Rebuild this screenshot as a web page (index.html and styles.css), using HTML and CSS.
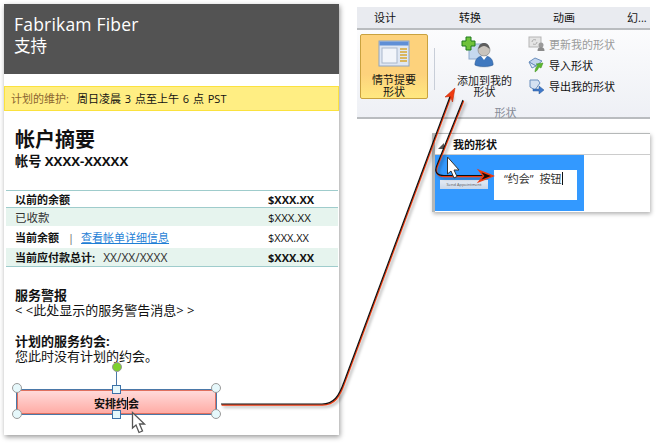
FILE: index.html
```html
<!DOCTYPE html>
<html lang="zh">

<head>
    <meta charset="UTF-8">
    <title>我的形状</title>
    <link rel="stylesheet" href="styles.css">
</head>

<body>
    <div class="page">
        <div class="brand">
            <div class="brand-name">Fabrikam Fiber</div>
            <div class="brand-sub">支持</div>
        </div>
        <div class="notice"><span class="notice-label">计划的维护:</span>周日凌晨 3 点至上午 6 点 PST</div>
        <h1>帐户摘要</h1>
        <h2>帐号 XXXX-XXXXX</h2>
        <div class="rows">
            <div class="row row-first"><b>以前的余额</b><b class="amount">$XXX.XX</b></div>
            <div class="row row-tint row-second"><span class="soft">已收款</span><span class="amount">$XXX.XX</span></div>
            <div class="row row-third"><span><b>当前余额</b><span class="pipe">|</span><a href="#">查看帐单详细信息</a></span><span class="amount">$XXX.XX</span></div>
            <div class="row row-tint row-last"><span><b>当前应付款总计:</b><span class="due">XX/XX/XXXX</span></span><b class="amount">$XXX.XX</b></div>
        </div>
        <div class="info">
            <b>服务警报</b>
            <div>&lt; &lt;此处显示的服务警告消息&gt; &gt;</div>
        </div>
        <div class="info info-next">
            <b>计划的服务约会:</b>
            <div>您此时没有计划的约会。</div>
        </div>
        <div class="shape">
            <span class="stem"></span>
            <span class="rotate"></span>
            <span class="dot dot-tl"></span>
            <span class="dot dot-tr"></span>
            <span class="dot dot-bl"></span>
            <span class="dot dot-br"></span>
            <span class="sq sq-top"></span>
            <span class="sq sq-bottom"></span>
            <b class="shape-text">安排约<i class="caret"></i>会</b>
        </div>
    </div>

    <div class="side">
        <div class="ribbon">
            <div class="tabs">
                <span class="tab tab-1">设计</span>
                <span class="tab tab-2">转换</span>
                <span class="tab tab-3">动画</span>
                <span class="tab tab-4">幻...</span>
            </div>
            <div class="tools">
                <div class="big-btn">
                    <svg width="32" height="27" viewBox="0 0 32 27">
                        <rect x="1" y="1" width="30" height="25" fill="#dfe7f3" stroke="#8ea3c0" />
                        <rect x="1.5" y="1.5" width="29" height="4" fill="#5f8fd6" />
                        <rect x="4" y="8" width="15" height="15" fill="#f2f5fa" stroke="#a9b7cc" />
                        <path d="M22 9h7M22 12h7M22 15h7M22 18h7M22 21h7" stroke="#d9a62e" stroke-width="1.4" />
                    </svg>
                    <span class="big-label">情节提要<br>形状</span>
                </div>
                <div class="sep"></div>
                <div class="add-btn">
                    <svg width="34" height="32" viewBox="0 0 34 32">
                        <rect x="8" y="8" width="17" height="15" fill="#c5d8ef" stroke="#8ea9cc" />
                        <path d="M5 1h5v4h4v5h-4v4H5v-4H1V5h4z" fill="#6fc23b" stroke="#1f7a1f" />
                        <ellipse cx="23" cy="28" rx="10" ry="4" fill="#dfe4ea" />
                        <path d="M14 29c0-6 3-9 9-9s9 3 9 9c-5 2-13 2-18 0z" fill="#3f78bf" stroke="#2a5b98" stroke-width=".6" />
                        <path d="M20 20l3 4 3-4z" fill="#fff" />
                        <circle cx="23" cy="14" r="6" fill="#c9c4bd" stroke="#7c7c7c" stroke-width=".6" />
                        <path d="M17.5 13c0-4 2.500-6 5.500-6s5.500 2 5.500 6c-2-2-4-3-5.500-3s-3.500 1-5.500 3z" fill="#5d5d5d" />
                    </svg>
                    <span class="add-label">添加到我的<br>形状</span>
                </div>
                <ul class="tool-list">
                    <li class="off">
                        <svg width="17" height="15" viewBox="0 0 17 15">
                            <rect x="1" y="1" width="12" height="10" fill="#e4e4e4" stroke="#b5b5b5" />
                            <path d="M4 6c0-2 2-3 4-2M9 6c0 2-2 3-4 2" stroke="#aaa" fill="none" />
                            <circle cx="13" cy="9" r="2.500" fill="#9b9b9b" />
                            <path d="M9.500 15c0-3 1.500-4 3.500-4s3.500 1 3.500 4z" fill="#8c8c8c" />
                        </svg>
                        更新我的形状
                    </li>
                    <li>
                        <svg width="17" height="16" viewBox="0 0 17 16">
                            <path d="M1 5l6-4 7 3-6 5z" fill="#c3d6ee" stroke="#6b8fbd" />
                            <path d="M1 5l3 6 4-2z" fill="#e3ecf7" stroke="#6b8fbd" />
                            <path d="M15 6l-2 5 -2-1c-1 2-2 4-4 5 0-3 1-5 3-7l-2-1z" fill="#5cb82e" stroke="#3d8f1c" stroke-width=".5" />
                        </svg>
                        导入形状
                    </li>
                    <li>
                        <svg width="17" height="16" viewBox="0 0 17 16">
                            <path d="M2 2h8l2 3-5 7-5-3z" fill="#d4e1f2" stroke="#6b8fbd" />
                            <path d="M5 11h6V8l5 4-5 4v-3H5z" fill="#3f78c9" stroke="#2a5b98" stroke-width=".5" />
                        </svg>
                        导出我的形状
                    </li>
                </ul>
            </div>
            <div class="group-name">形状</div>
        </div>

        <div class="gallery">
            <div class="gallery-head"><span class="tri"></span><b>我的形状</b></div>
            <div class="gallery-body">
                <div class="thumb">Send Appointment</div>
                <div class="rename">“约会” 按钮<i class="caret"></i></div>
            </div>
        </div>
    </div>

    <!-- 连接线和光标 -->
    <svg class="overlay" width="658" height="444" viewBox="0 0 658 444">
        <defs>
            <filter id="soft" x="-10%" y="-10%" width="120%" height="120%">
                <feDropShadow dx="2" dy="2" stdDeviation="1.500" flood-color="#000" flood-opacity=".3" />
            </filter>
        </defs>
        <g fill="none" filter="url(#soft)">
            <path d="M221 404H322C334 404 339 396 344 382L451 94" stroke="#f03a10" stroke-width="1.400" transform="translate(.6 1)" />
            <path d="M221 404H322C334 404 339 396 344 382L451 94" stroke="#111" stroke-width="1.200" />
            <path d="M463 100L437 165C434 172 437 175.500 444 175.500H484" stroke="#f03a10" stroke-width="1.400" transform="translate(.6 1)" />
            <path d="M463 100L437 165C434 172 437 175.500 444 175.500H484" stroke="#111" stroke-width="1.200" />
        </g>
        <path d="M455 88L445 97L450.500 96.500L452.500 102z" fill="#f03a10" stroke="#c52c08" stroke-width=".6" />
        <path d="M493 176L479 170.500L483.500 176L479 181.500z" fill="#1a0d08" stroke="#f03a10" stroke-width="1.400" />
        <path d="M447.500 157V174L451 171L454 178L457 176.500L454 170H459z" fill="#fff" stroke="#333" stroke-width="1" />
        <path d="M132.500 412.500V428L136 425L139 432.500L142.500 431L139.500 424H144.500z" fill="#fff" stroke="#555" stroke-width="1.300" />
    </svg>
</body>

</html>
```

FILE: styles.css
```css
* {
    box-sizing: border-box;
    margin: 0;
    padding: 0;
}

body {
    width: 658px;
    height: 444px;
    overflow: hidden;
    background: #fff;
    display: flex;
    align-items: flex-start;
    padding: 4px 0 0 4px;
    font-family: "Open Sans", "Noto Sans CJK SC", sans-serif;
    color: #111;
    position: relative;
}

.page {
    width: 335px;
    height: 431px;
    background: #fff;
    box-shadow: 1px 2px 5px rgba(0, 0, 0, 0.4);
    flex: none;
    display: flex;
    flex-direction: column;
}

.brand {
    height: 70px;
    background: #535353;
    color: #fff;
    padding: 10px 0 0 10px;
}

.brand-name {
    font-size: 17.5px;
    line-height: 21px;
    letter-spacing: 0.2px;
}

.brand-sub {
    font-size: 16.5px;
    line-height: 21px;
}

.notice {
    margin-top: 12px;
    height: 25px;
    background: #ffee83;
    border: 1px solid #fbe23e;
    padding-left: 6px;
    font-size: 11px;
    line-height: 23px;
    word-spacing: 1px;
    white-space: nowrap;
}

.notice-label {
    color: #8a6530;
    margin-right: 8px;
}

h1 {
    margin: 16px 0 0 11px;
    font-size: 20px;
    line-height: 26px;
}

h2 {
    margin: -1px 0 0 11px;
    font-size: 13.2px;
    line-height: 18px;
}

.rows {
    margin: 20px 1px 0 2px;
    border-top: 1px solid #9fcccc;
    border-bottom: 1px solid #9fcccc;
    font-size: 11px;
}

.row {
    display: flex;
    justify-content: space-between;
    align-items: center;
    padding: 0 0 0 9px;
    white-space: nowrap;
}

.row-first {
    height: 17px;
    border-bottom: 1px solid #9fcccc;
}

.row-second {
    height: 18px;
    font-size: 11.5px;
}

.row-third {
    height: 22px;
}

.row-last {
    height: 18px;
}

.row-tint {
    background: #e6f4ee;
}

.amount {
    width: 70px;
    flex: none;
}

.soft {
    color: #333;
}

.pipe {
    color: #666;
    margin: 0 7px 0 9px;
}

a {
    color: #1f7fd6;
}

.due {
    color: #333;
    margin-left: 8px;
    font-size: 12px;
}

.info {
    margin: 21px 0 0 11px;
    font-size: 13px;
    line-height: 15px;
}

.info-next {
    margin-top: 16px;
}

.shape {
    position: relative;
    margin: 25px 0 0 12px;
    width: 201px;
    height: 26px;
    padding-top: 2px;
    border: 1px solid #4a78a8;
    box-shadow: inset 0 0 0 1px #e0705f;
    background: linear-gradient(#ffdcdc, #ffaaa3);
    display: flex;
    justify-content: center;
    align-items: center;
}

.shape-text {
    font-size: 11px;
}

.caret {
    display: inline-block;
    width: 1px;
    height: 13px;
    background: #111;
    vertical-align: -2px;
}

.dot {
    position: absolute;
    width: 10px;
    height: 10px;
    border-radius: 50%;
    background: #e6f8fb;
    border: 1px solid #9a9a9a;
}

.dot-tl {
    left: -5px;
    top: -7px;
}

.dot-tr {
    right: -5px;
    top: -7px;
}

.dot-bl {
    left: -5px;
    bottom: -5px;
}

.dot-br {
    right: -5px;
    bottom: -5px;
}

.sq {
    position: absolute;
    left: 95px;
    width: 9px;
    height: 9px;
    background: #e6f8fb;
    border: 1px solid #3d72a8;
}

.sq-top {
    top: -5px;
}

.sq-bottom {
    bottom: -5px;
}

.stem {
    position: absolute;
    left: 99px;
    top: -20px;
    width: 1px;
    height: 20px;
    background: #4a78a8;
}

.rotate {
    position: absolute;
    left: 95px;
    top: -28px;
    width: 10px;
    height: 10px;
    border-radius: 50%;
    background: #7fd02e;
    border: 1px solid #999;
}

.side {
    margin: 3px 0 0 18px;
    width: 293px;
    flex: none;
}

.ribbon {
    height: 112px;
    background: linear-gradient(#fff, #eef0f5);
    border-bottom: 2px solid #b9bcbf;
}

.tabs {
    height: 23px;
    background: #e9ebf0;
    border-bottom: 2px solid #b9bcbf;
    font-size: 11px;
    line-height: 22px;
    display: flex;
}

.tab {
    flex: none;
    white-space: nowrap;
}

.tab-1 {
    margin-left: 17px;
    width: 85px;
}

.tab-2 {
    width: 94px;
}

.tab-3 {
    width: 74px;
}

.tools {
    display: flex;
    height: 76px;
    padding: 4px 0 0 3px;
}

.big-btn {
    width: 68px;
    height: 65px;
    border: 1px solid #c9a23f;
    border-radius: 2px;
    background: linear-gradient(#fdd27c 0, #fdd27c 62%, #ffe880 100%);
    display: flex;
    flex-direction: column;
    align-items: center;
    padding-top: 5px;
    flex: none;
}

.big-label,
.add-label {
    display: block;
    font-size: 11px;
    line-height: 12px;
    text-align: center;
}

.big-label {
    margin-top: 7px;
}

.sep {
    width: 1px;
    height: 42px;
    margin: 14px 0 0 6px;
    background: #c8ced8;
    flex: none;
}

.add-btn {
    width: 86px;
    flex: none;
    display: flex;
    flex-direction: column;
    align-items: center;
    padding-top: 2px;
}

.add-label {
    margin: 7px 0 0 13px;
    line-height: 11px;
    color: #222;
}

.tool-list {
    list-style: none;
    margin: -1px 0 0 7px;
    font-size: 11px;
}

.tool-list li {
    height: 21px;
    display: flex;
    align-items: center;
    gap: 4px;
    white-space: nowrap;
}

.off {
    color: #9a9a9a;
}

.group-name {
    text-align: center;
    padding-left: 4px;
    font-size: 11px;
    line-height: 13px;
    color: #868b96;
}

.gallery {
    margin: 14px 0 0 75px;
    width: 218px;
    height: 79px;
    background: #fff;
    border-left: 3px solid #b5b8b8;
    border-top: 1px solid #b5b8b8;
    box-shadow: 1px 2px 4px rgba(0, 0, 0, 0.3);
}

.gallery-head {
    height: 21px;
    border-bottom: 1px solid #ccc;
    font-size: 11px;
    line-height: 21px;
    padding-left: 18px;
    position: relative;
}

.tri {
    position: absolute;
    left: 3px;
    top: 9px;
    width: 0;
    height: 0;
    border-left: 6px solid transparent;
    border-bottom: 6px solid #555;
}

.gallery-body {
    width: 149px;
    height: 56px;
    background: #3399ff;
    position: relative;
    display: flex;
    padding: 15px 0 0 59px;
}

.thumb {
    position: absolute;
    left: 5px;
    top: 25px;
    width: 48px;
    height: 9px;
    background: linear-gradient(#e6edf6, #c9d6e8);
    font-size: 4px;
    line-height: 9px;
    text-align: center;
    color: #555;
    white-space: nowrap;
}

.rename {
    width: 83px;
    height: 30px;
    background: #fff;
    font-size: 11px;
    line-height: 18px;
    padding-left: 10px;
    word-spacing: 3px;
    color: #333;
    white-space: nowrap;
}

.overlay {
    position: absolute;
    left: 0;
    top: 0;
    pointer-events: none;
}
```
